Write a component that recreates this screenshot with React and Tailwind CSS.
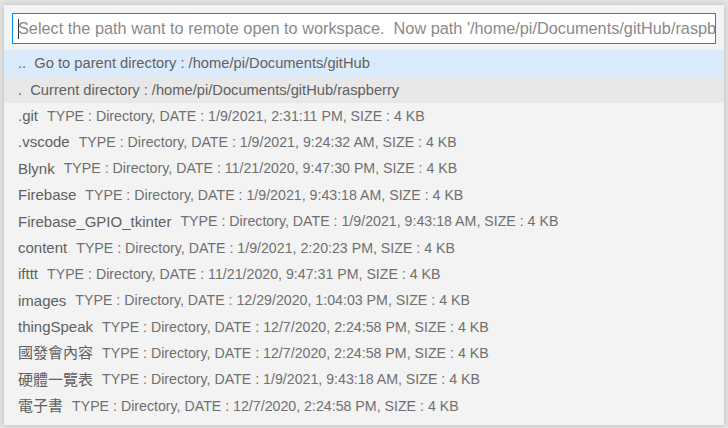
const rows = [
  ['.git', '1/9/2021, 2:31:11 PM'],
  ['.vscode', '1/9/2021, 9:24:32 AM'],
  ['Blynk', '11/21/2020, 9:47:30 PM'],
  ['Firebase', '1/9/2021, 9:43:18 AM'],
  ['Firebase_GPIO_tkinter', '1/9/2021, 9:43:18 AM'],
  ['content', '1/9/2021, 2:20:23 PM'],
  ['ifttt', '11/21/2020, 9:47:31 PM'],
  ['images', '12/29/2020, 1:04:03 PM'],
  ['thingSpeak', '12/7/2020, 2:24:58 PM'],
  ['國發會內容', '12/7/2020, 2:24:58 PM'],
  ['硬體一覽表', '1/9/2021, 9:43:18 AM'],
  ['電子書', '12/7/2020, 2:24:58 PM'],
]

const font = { fontFamily: '"Liberation Sans", "Noto Sans CJK TC", sans-serif' }

export default function App() {
  return (
    <div className="w-[728px] h-[428px] bg-[#e4e4e4] pt-[5px] px-[4px] overflow-hidden" style={font}>
      <div className="h-[420px] bg-[#f3f3f3] shadow-[0_0_6px_rgba(0,0,0,0.18)] flex flex-col">
        {/* Input */}
        <div className="px-[8px] pt-[8px] pb-[6px]">
          <div className="h-[31px] border border-[#0090f1] bg-white flex items-center pl-[5px] overflow-hidden whitespace-nowrap">
            <span className="w-px h-[20px] bg-[#333] mr-[-1px] shrink-0" />
            <span className="text-[16.3px] text-[#8a8a8a]">
              Select the path want to remote open to workspace.&nbsp; Now path '/home/pi/Documents/gitHub/raspberry'
            </span>
          </div>
        </div>

        {/* List */}
        <div className="flex flex-col">
          <div className="h-[27px] bg-[#dcebfc] flex items-center pl-[14px] text-[14.7px] text-[#616161] whitespace-nowrap">
            ..&nbsp;&nbsp;Go to parent directory : /home/pi/Documents/gitHub
          </div>
          <div className="h-[26px] bg-[#e8e8e8] flex items-center pl-[14px] text-[14.7px] text-[#616161] whitespace-nowrap">
            .&nbsp;&nbsp;Current directory : /home/pi/Documents/gitHub/raspberry
          </div>
          {rows.map(([name, date]) => (
            <div key={name} className="h-[26.4px] flex items-center pl-[14px] whitespace-nowrap">
              <span className="text-[15px] text-[#616161]">{name}</span>
              <span className="text-[14.2px] text-[#707070] ml-[9px]">
                TYPE : Directory, DATE : {date}, SIZE : 4 KB
              </span>
            </div>
          ))}
        </div>
      </div>
    </div>
  )
}
